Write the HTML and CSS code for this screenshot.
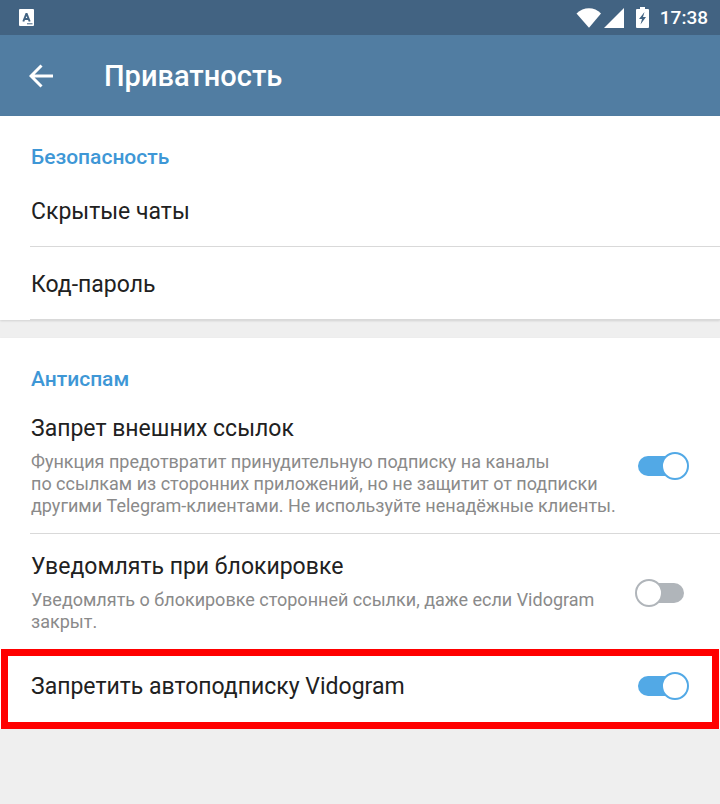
FILE: index.html
```html
<!DOCTYPE html>
<html lang="ru">
<head>
  <meta charset="UTF-8">
  <meta name="viewport" content="width=device-width, initial-scale=1.0">
  <title>Приватность</title>
  <link rel="stylesheet" href="styles.css">
</head>
<body>
  <div class="status-bar">
    <svg class="status-app" width="15" height="17" viewBox="0 0 15 17" aria-hidden="true">
      <rect width="15" height="17" rx="1" fill="#fff"/>
      <path d="M4.3 12.5 7.3 5H7.7L10.7 12.5M5.4 10H9.6" fill="none" stroke="#426382" stroke-width="2"/>
      <path d="M8 14.8H13.5" stroke="#426382" stroke-width="1"/>
    </svg>
    <div class="status-icons">
      <svg width="26" height="20" viewBox="0 0 26 20" aria-hidden="true">
        <path d="M0.5 5.5C7.5-1.5 18.5-1.5 25 5.5L13 19.8Z" fill="#fff"/>
      </svg>
      <svg class="signal" width="20" height="20" viewBox="0 0 20 20" aria-hidden="true">
        <path d="M20 0V20H0Z" fill="#fff"/>
      </svg>
      <svg class="battery" width="13" height="21" viewBox="0 0 13 21" aria-hidden="true">
        <path d="M4 0H9V2H12Q13 2 13 3V20Q13 21 12 21H1Q0 21 0 20V3Q0 2 1 2H4Z" fill="#fff"/>
        <path d="M8.5 5 3 12H6L4.5 17.5 10 10H7Z" fill="#426382"/>
      </svg>
      <span class="clock">17:38</span>
    </div>
  </div>
  <header class="toolbar">
    <button class="back-btn" type="button" aria-label="Назад">
      <svg width="24" height="24" viewBox="0 0 24 24" aria-hidden="true">
        <path d="M24 12H2M12.5 1.5 2 12 12.5 22.5" fill="none" stroke="#fff" stroke-width="3"/>
      </svg>
    </button>
    <h1>Приватность</h1>
  </header>
  <main>
    <section class="group">
      <h2>Безопасность</h2>
      <a class="row link-row" href="#hidden-chats">Скрытые чаты</a>
      <a class="row link-row" href="#passcode">Код-пароль</a>
    </section>
    <section class="group">
      <h2>Антиспам</h2>
      <div class="row">
        <div class="row-text">
          <label class="row-title" for="external-links">Запрет внешних ссылок</label>
          <p class="row-desc">Функция предотвратит принудительную подписку на каналы<br>по ссылкам из сторонних приложений, но не защитит от подписки<br>другими Telegram-клиентами. Не используйте ненадёжные клиенты.</p>
        </div>
        <input class="switch" type="checkbox" id="external-links" checked>
      </div>
      <div class="row last">
        <div class="row-text">
          <label class="row-title" for="block-notify">Уведомлять при блокировке</label>
          <p class="row-desc">Уведомлять о блокировке сторонней ссылки, даже если Vidogram<br>закрыт.</p>
        </div>
        <input class="switch" type="checkbox" id="block-notify">
      </div>
      <div class="highlight">
        <label class="row-title" for="auto-subscribe">Запретить автоподписку Vidogram</label>
        <input class="switch" type="checkbox" id="auto-subscribe" checked>
      </div>
    </section>
  </main>
</body>
</html>
```

FILE: styles.css
```css
*, *::before, *::after { box-sizing: border-box; }
body {
  margin: 0;
  background: #efefef;
  color: #212121;
  font-family: Roboto, Arial, sans-serif;
}
h1, h2, p {
  margin: 0;
}
.status-bar {
  display: flex;
  align-items: center;
  justify-content: space-between;
  height: 35px;
  padding: 0 12px 0 19px;
  background: #426382;
  color: #fff;
}
.status-icons {
  display: flex;
  align-items: center;
}
.signal {
  margin-left: 2px;
}
.battery {
  margin-left: 12px;
}
.clock {
  margin-left: 11px;
  font-size: 19px;
  line-height: 24px;
  font-weight: 500;
}
.toolbar {
  display: flex;
  align-items: center;
  gap: 51px;
  height: 81px;
  padding: 0 29px;
  background: #517da2;
  color: #fff;
}
.back-btn {
  display: flex;
  padding: 0;
  border: none;
  background: none;
  cursor: pointer;
}
h1 {
  font-size: 29px;
  line-height: 36px;
  font-weight: 500;
}
.group {
  padding-top: 26px;
  background: #fff;
  box-shadow: 0 1px 2px rgba(0,0,0,0.12);
}
.group + .group {
  margin-top: 18px;
}
h2 {
  padding: 0 31px 2px;
  font-size: 21px;
  line-height: 30px;
  font-weight: 500;
  color: #3e97d6;
}
.row {
  display: flex;
  align-items: center;
  justify-content: space-between;
  margin-left: 30px;
  padding: 18px 31px 16px 1px;
  border-bottom: 1px solid #d9d9d9;
}
.row.last {
  border-bottom: none;
}
.link-row {
  padding: 23px 31px 19px 1px;
  font-size: 23px;
  line-height: 30px;
  color: #212121;
  text-decoration: none;
}
.row-title {
  display: block;
  font-size: 23px;
  line-height: 30px;
}
.row-desc {
  margin-top: 7px;
  font-size: 18px;
  line-height: 22px;
  color: #8a8a8a;
}
.switch {
  appearance: none;
  display: grid;
  align-items: center;
  flex-shrink: 0;
  width: 54px;
  height: 28px;
  margin: 0;
  cursor: pointer;
}
.switch::before, .switch::after {
  content: "";
  grid-area: 1 / 1;
  border-radius: 14px;
}
.switch::before {
  height: 20px;
  margin: 0 5px 0 3px;
  background: #b0b5ba;
}
.switch::after {
  width: 28px;
  height: 28px;
  border: 2px solid #b0b5ba;
  background: #fff;
}
.switch:checked::before {
  background: #52a9e6;
}
.switch:checked::after {
  justify-self: end;
  border-color: #52a9e6;
}
.highlight {
  display: flex;
  align-items: flex-start;
  justify-content: space-between;
  margin: 0 1px;
  padding: 16px 23px 20px;
  border: 7px solid #f00;
}
```
